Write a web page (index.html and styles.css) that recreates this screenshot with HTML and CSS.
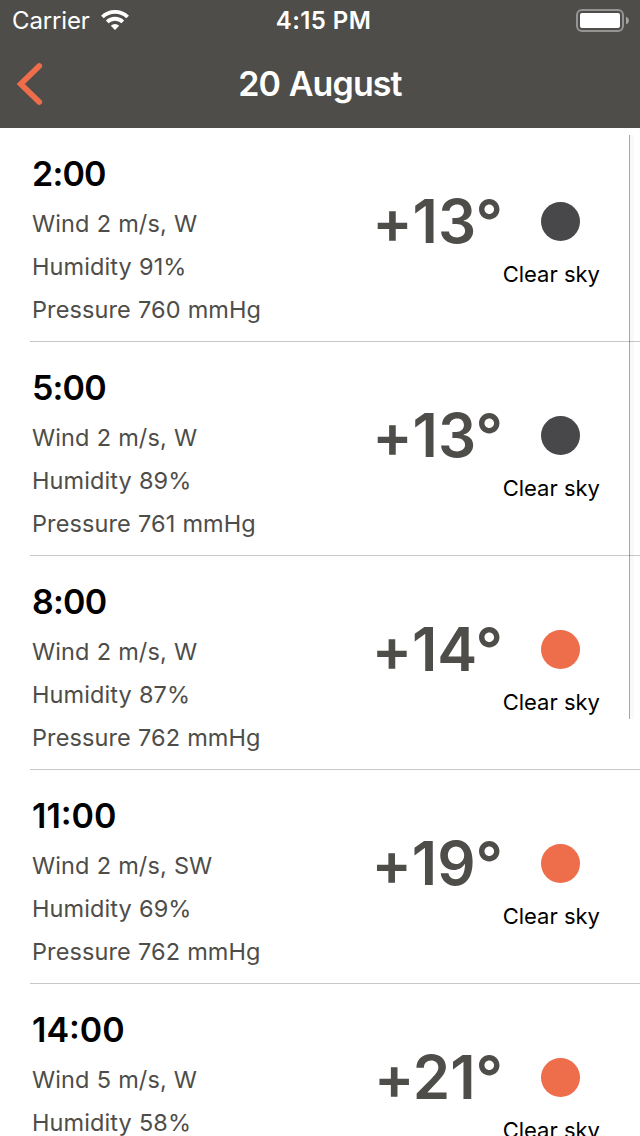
FILE: index.html
```html
<!DOCTYPE html>
<html lang="en">
<head>
<meta charset="utf-8">
<title>20 August</title>
<link rel="stylesheet" href="styles.css">
</head>
<body>
<header class="header">
  <div class="status">
    <div class="carrier"><span class="carrier-name">Carrier</span>
      <svg class="wifi" width="28" height="20" viewBox="0 0 28 20"><g fill="none" stroke="#fff" stroke-width="3.800"><path d="M1.400 7a18 18 0 0 1 25.200 0"/><path d="M6.200 11.900a11.200 11.200 0 0 1 15.600 0"/></g><path d="M14 20l-4.200-4.200a6 6 0 0 1 8.400 0z" fill="#fff"/></svg>
    </div>
    <span class="clock">4:15 PM</span>
    <svg class="battery" width="53" height="23" viewBox="0 0 53 23"><rect x="1" y="1" width="46" height="21" rx="5" fill="none" stroke="#959492" stroke-width="2"/><rect x="4" y="4" width="40" height="15" rx="2" fill="#fff"/><path d="M50 7.500q3 1.500 3 4t-3 4z" fill="#a5a4a2"/></svg>
  </div>
  <div class="nav">
    <svg class="back" width="28" height="44" viewBox="0 0 28 44"><path d="M23.200 4L4.800 22l18.400 18" fill="none" stroke="#ee6d4a" stroke-width="5.800" stroke-linecap="round"/></svg>
    <h1 class="title">20 August</h1>
  </div>
</header>
<main class="list" id="list"></main>
<div class="scrollbar"></div>
<script src="app.js"></script>
</body>
</html>
```
FILE: styles.css
```css
* { box-sizing: border-box; }
html { overflow: hidden; }
body { margin: 0; width: 640px; height: 1136px; overflow: hidden; background: #fff; font-family: Inter, "Liberation Sans", sans-serif; }
.header { height: 128px; background: #4e4d49; color: #fff; }
.status { height: 41px; display: grid; grid-template-columns: 1fr auto 1fr; align-items: center; padding: 0 11px 0 12px; font-size: 24px; line-height: 41px; }
.carrier { display: flex; align-items: center; gap: 11px; }
.wifi { margin-bottom: 1px; }
.carrier-name { letter-spacing: -0.15px; }
.clock { font-weight: 600; letter-spacing: 0.4px; padding-left: 6px; }
.battery { justify-self: end; }
.nav { height: 85px; display: grid; grid-template-columns: 80px 1fr 80px; align-items: center; }
.back { margin-left: 16px; }
.title { margin: 0; text-align: center; font-size: 34px; line-height: 44px; font-weight: 600; letter-spacing: -0.9px; word-spacing: 1px; }
.list { height: 1008px; overflow: hidden; }
.row { display: flex; justify-content: space-between; height: 214px; margin-left: 30px; padding: 24px 40px 0 2px; border-bottom: 1px solid #c8c7cc; }
.time { margin: 0 0 6px; font-size: 34px; line-height: 44px; font-weight: 600; letter-spacing: -0.8px; color: #000; }
.long { letter-spacing: 0; }
.detail { margin: 0; font-size: 23.5px; line-height: 43px; letter-spacing: 0.1px; word-spacing: 0.4px; color: #4e4d49; white-space: nowrap; }
.weather { display: flex; flex-direction: column; align-items: flex-end; padding-top: 33px; }
.reading { display: flex; align-items: center; height: 72px; gap: 38px; padding-right: 20px; }
.temp { font-size: 60px; line-height: 72px; font-weight: 600; color: #4e4d49; white-space: nowrap; font-feature-settings: "calt" 0; }
.dot { width: 39px; height: 39px; border-radius: 50%; background: #ee6d4a; }
.night { background: #48484a; }
.condition { margin: 3px 0 0; font-size: 22px; line-height: 28px; color: #000; }
.scrollbar { position: absolute; left: 629px; top: 135px; width: 5px; height: 584px; border-left: 1px solid rgba(0,0,0,.35); background: rgba(0,0,0,.025); background-clip: padding-box; }
```
FILE: app.js
```js
const forecast = [
  ["2:00", "2 m/s, W", 91, 760, "+13°", true],
  ["5:00", "2 m/s, W", 89, 761, "+13°", true],
  ["8:00", "2 m/s, W", 87, 762, "+14°", false],
  ["11:00", "2 m/s, SW", 69, 762, "+19°", false],
  ["14:00", "5 m/s, W", 58, 762, "+21°", false]
];
document.getElementById("list").innerHTML = forecast.map(([time, wind, humidity, pressure, temp, night]) => `
<section class="row">
  <div class="details">
    <h2 class="time${time.length > 4 ? " long" : ""}">${time}</h2>
    <p class="detail">Wind ${wind}</p>
    <p class="detail">Humidity ${humidity}%</p>
    <p class="detail">Pressure ${pressure} mmHg</p>
  </div>
  <div class="weather">
    <div class="reading"><span class="temp">${temp}</span><span class="dot${night ? " night" : ""}"></span></div>
    <p class="condition">Clear sky</p>
  </div>
</section>`).join("");
```
